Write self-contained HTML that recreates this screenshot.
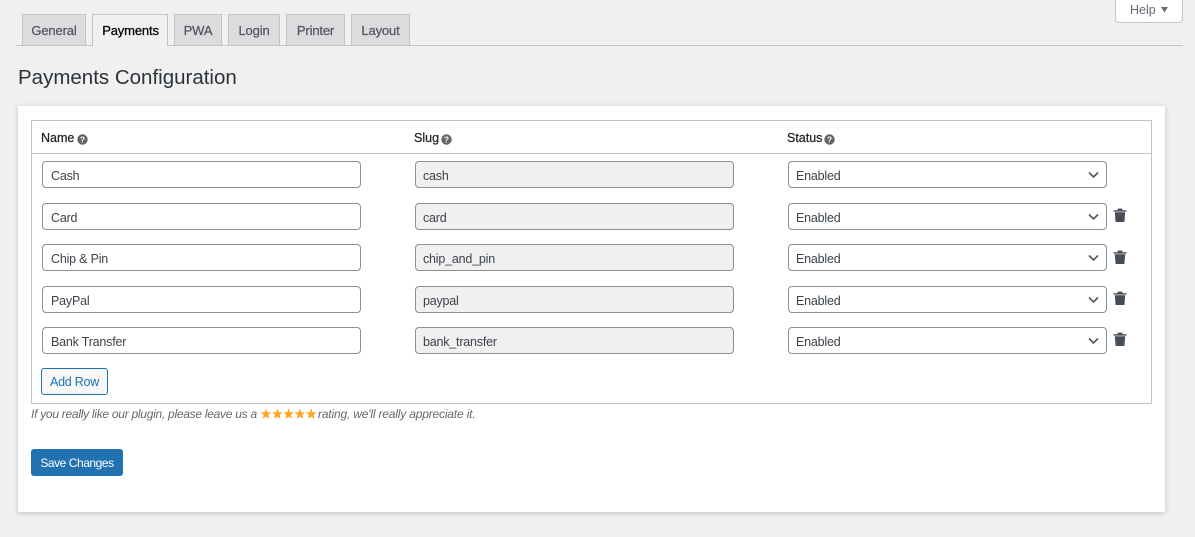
<!DOCTYPE html>
<html><head><meta charset="utf-8"><style>
html,body{margin:0;padding:0;width:1195px;height:537px;overflow:hidden;background:#f0f0f1;font-family:"Liberation Sans",sans-serif;font-size:13px;color:#3c434a}
.a{position:absolute;box-sizing:border-box;white-space:nowrap}
.tab{top:14px;height:31px;background:#dcdcde;border:1px solid #c3c4c7;border-bottom:none;text-align:center;line-height:32px;color:#50575e;font-size:13px;letter-spacing:-.15px;-webkit-text-stroke:.25px #50575e}
.tab.on{background:#f0f0f1;color:#000;height:32px;z-index:2;-webkit-text-stroke:.25px #000}
.in{height:27px;border:1px solid #8c8f94;border-radius:4px;background:#fff;width:319px;line-height:29px;padding-left:8px;color:#3c434a;font-size:12.5px;letter-spacing:-.2px}
.ro{background:#f0f0f1;left:415px;padding-left:7px}
.sel{left:788px;padding-left:7px}
.th{top:130px;color:#1d2327;font-size:12.5px;line-height:17px;letter-spacing:0;-webkit-text-stroke:.25px #1d2327}
svg{position:absolute}
</style></head><body>
<div class="a" style="left:16px;top:45px;width:1167px;height:1px;background:#c3c4c7"></div>
<div class="a tab" style="left:22px;width:64px">General</div>
<div class="a tab on" style="left:92px;width:76px;padding-left:1px">Payments</div>
<div class="a tab" style="left:174px;width:48px">PWA</div>
<div class="a tab" style="left:228px;width:52px">Login</div>
<div class="a tab" style="left:286px;width:59px">Printer</div>
<div class="a tab" style="left:351px;width:59px">Layout</div>
<div class="a" style="left:1115px;top:-4px;width:68px;height:27px;background:#fff;border:1px solid #c3c4c7;border-radius:0 0 4px 4px;line-height:27px;padding-left:14px;color:#646970;font-size:12.5px">Help</div>
<svg style="left:1161px;top:7px" width="8" height="6"><path d="M0 0H7L3.5 5.5Z" fill="#646970"/></svg>
<div class="a" style="left:18px;top:65px;font-size:20.5px;line-height:25px;color:#2c3338;letter-spacing:0">Payments Configuration</div>
<div class="a" style="left:18px;top:106px;width:1147px;height:406px;background:#fff;box-shadow:0 1px 5px rgba(0,0,0,.2)"></div>
<div class="a" style="left:31px;top:120px;width:1121px;height:284px;border:1px solid #c3c4c7"></div>
<div class="a" style="left:31px;top:153px;width:1121px;height:1px;background:#c3c4c7"></div>
<div class="a th" style="left:41px">Name</div>
<div class="a th" style="left:414px">Slug</div>
<div class="a th" style="left:787px">Status</div>
<svg style="left:77px;top:134px" width="11" height="11"><circle cx="5.5" cy="5.5" r="5.2" fill="#646464"/><text x="5.5" y="8.5" font-size="8.5" font-weight="700" fill="#fff" text-anchor="middle" font-family="Liberation Sans">?</text></svg>
<svg style="left:441px;top:134px" width="11" height="11"><circle cx="5.5" cy="5.5" r="5.2" fill="#646464"/><text x="5.5" y="8.5" font-size="8.5" font-weight="700" fill="#fff" text-anchor="middle" font-family="Liberation Sans">?</text></svg>
<svg style="left:824px;top:134px" width="11" height="11"><circle cx="5.5" cy="5.5" r="5.2" fill="#646464"/><text x="5.5" y="8.5" font-size="8.5" font-weight="700" fill="#fff" text-anchor="middle" font-family="Liberation Sans">?</text></svg>

<div class="a in" style="left:42px;top:161px">Cash</div><div class="a in ro" style="top:161px">cash</div><div class="a in sel" style="top:161px">Enabled</div>
<svg style="left:1088px;top:171px" width="12" height="8"><path d="M1 1.5L5.5 6L10 1.5" fill="none" stroke="#50575e" stroke-width="1.6"/></svg>

<div class="a in" style="left:42px;top:203px">Card</div><div class="a in ro" style="top:203px">card</div><div class="a in sel" style="top:203px">Enabled</div>
<svg style="left:1088px;top:213px" width="12" height="8"><path d="M1 1.5L5.5 6L10 1.5" fill="none" stroke="#50575e" stroke-width="1.6"/></svg>
<svg style="left:1113px;top:208px" width="14" height="15"><path d="M.5 2.2H4.3L4.8 .6H9.2L9.7 2.2H13.5V3.6H.5ZM1.8 4.2H12.2L11.4 14H2.6Z" fill="#454c56"/></svg>

<div class="a in" style="left:42px;top:244px">Chip &amp; Pin</div><div class="a in ro" style="top:244px">chip_and_pin</div><div class="a in sel" style="top:244px">Enabled</div>
<svg style="left:1088px;top:254px" width="12" height="8"><path d="M1 1.5L5.5 6L10 1.5" fill="none" stroke="#50575e" stroke-width="1.6"/></svg>
<svg style="left:1113px;top:250px" width="14" height="15"><path d="M.5 2.2H4.3L4.8 .6H9.2L9.7 2.2H13.5V3.6H.5ZM1.8 4.2H12.2L11.4 14H2.6Z" fill="#454c56"/></svg>

<div class="a in" style="left:42px;top:286px">PayPal</div><div class="a in ro" style="top:286px">paypal</div><div class="a in sel" style="top:286px">Enabled</div>
<svg style="left:1088px;top:296px" width="12" height="8"><path d="M1 1.5L5.5 6L10 1.5" fill="none" stroke="#50575e" stroke-width="1.6"/></svg>
<svg style="left:1113px;top:291px" width="14" height="15"><path d="M.5 2.2H4.3L4.8 .6H9.2L9.7 2.2H13.5V3.6H.5ZM1.8 4.2H12.2L11.4 14H2.6Z" fill="#454c56"/></svg>

<div class="a in" style="left:42px;top:327px">Bank Transfer</div><div class="a in ro" style="top:327px">bank_transfer</div><div class="a in sel" style="top:327px">Enabled</div>
<svg style="left:1088px;top:337px" width="12" height="8"><path d="M1 1.5L5.5 6L10 1.5" fill="none" stroke="#50575e" stroke-width="1.6"/></svg>
<svg style="left:1113px;top:332px" width="14" height="15"><path d="M.5 2.2H4.3L4.8 .6H9.2L9.7 2.2H13.5V3.6H.5ZM1.8 4.2H12.2L11.4 14H2.6Z" fill="#454c56"/></svg>

<div class="a" style="left:41px;top:368px;width:67px;height:27px;border:1px solid #2271b1;border-radius:3px;background:#f6f7f7;color:#2271b1;text-align:center;line-height:27px;font-size:12.5px;letter-spacing:-.25px">Add Row</div>
<div class="a" style="left:31px;top:406px;font-style:italic;font-size:12px;line-height:16px;color:#646970;letter-spacing:-.27px">If you really like our plugin, please leave us a</div>
<svg style="left:260px;top:407px" width="58" height="14" fill="#ffa624">
<polygon id="s" points="6,1.5 7.4,5.2 11.3,5.4 8.3,7.9 9.3,11.7 6,9.6 2.7,11.7 3.7,7.9 .7,5.4 4.6,5.2"/>
<polygon transform="translate(11.3 0)" points="6,1.5 7.4,5.2 11.3,5.4 8.3,7.9 9.3,11.7 6,9.6 2.7,11.7 3.7,7.9 .7,5.4 4.6,5.2"/>
<polygon transform="translate(22.6 0)" points="6,1.5 7.4,5.2 11.3,5.4 8.3,7.9 9.3,11.7 6,9.6 2.7,11.7 3.7,7.9 .7,5.4 4.6,5.2"/>
<polygon transform="translate(33.9 0)" points="6,1.5 7.4,5.2 11.3,5.4 8.3,7.9 9.3,11.7 6,9.6 2.7,11.7 3.7,7.9 .7,5.4 4.6,5.2"/>
<polygon transform="translate(45.2 0)" points="6,1.5 7.4,5.2 11.3,5.4 8.3,7.9 9.3,11.7 6,9.6 2.7,11.7 3.7,7.9 .7,5.4 4.6,5.2"/>
</svg>
<div class="a" style="left:318px;top:406px;font-style:italic;font-size:12px;line-height:16px;color:#646970;letter-spacing:-.18px">rating, we'll really appreciate it.</div>
<div class="a" style="left:31px;top:449px;width:92px;height:27px;background:#2271b1;border-radius:3px;color:#fff;text-align:center;line-height:28px;font-size:12px;letter-spacing:-.45px">Save Changes</div>
</body></html>
